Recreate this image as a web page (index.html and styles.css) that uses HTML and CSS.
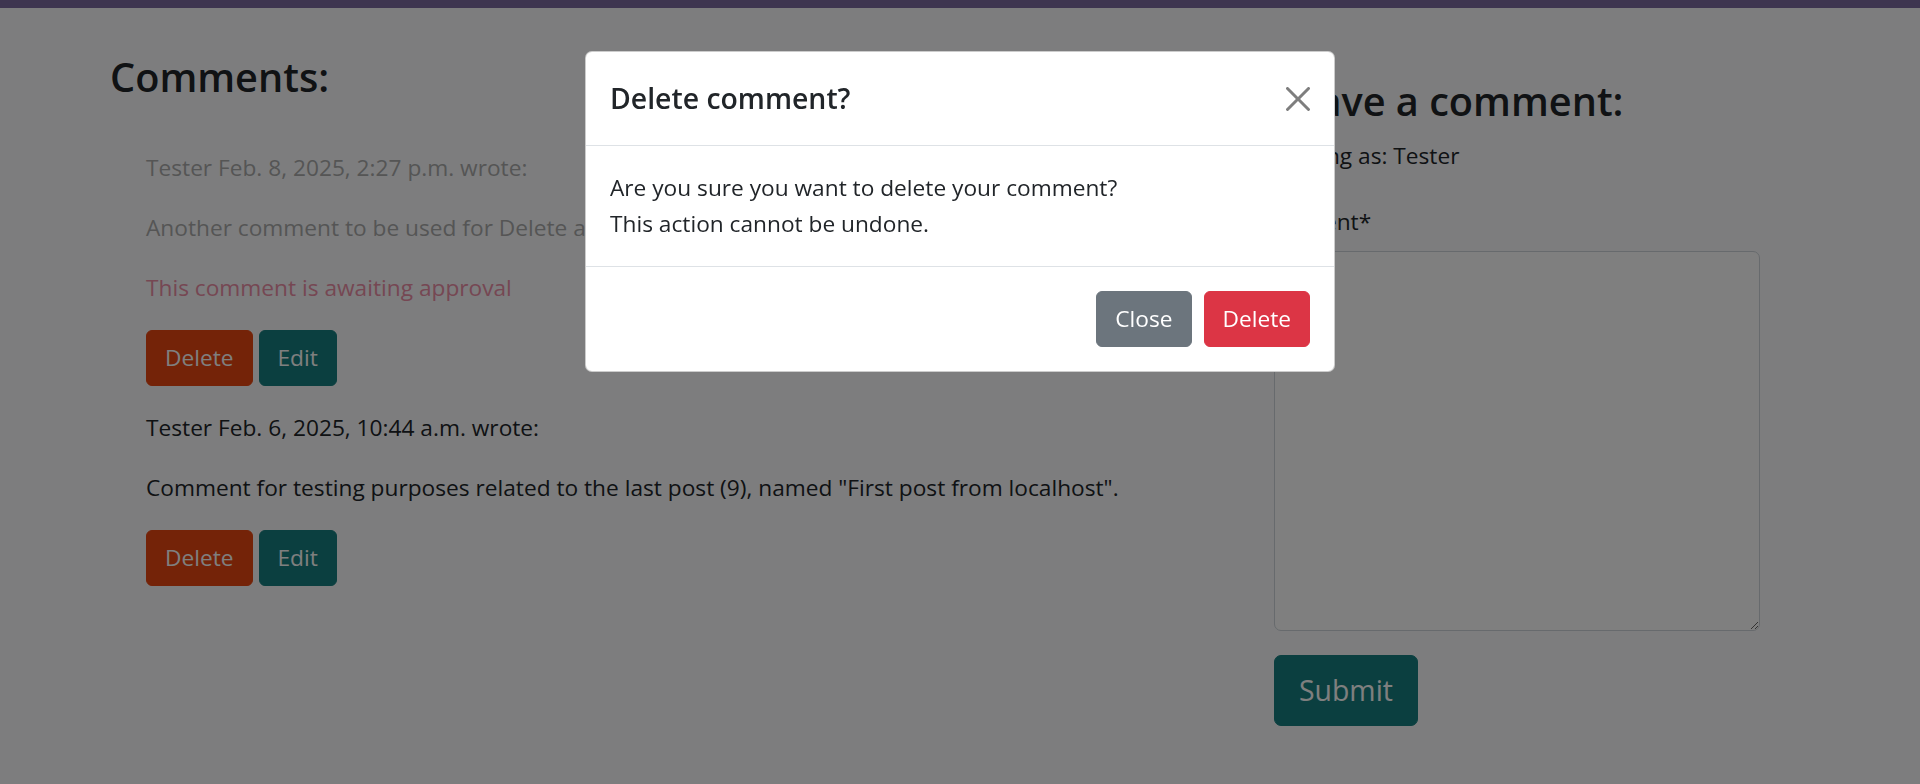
FILE: index.html
```html
<!DOCTYPE html>
<html lang="en">
<head>
<meta charset="utf-8">
<title>Post comments</title>
<link rel="stylesheet" href="styles.css">
</head>
<body class="modal-open">
  <div class="topbar"></div>
  <main class="main">
    <div class="container">
      <div class="row">
        <section class="col col-8">
          <h3 class="heading">Comments:</h3>
          <div class="card-body">
            <div class="comment">
              <p class="faded">Tester Feb. 8, 2025, 2:27 p.m. wrote:</p>
              <div class="comment-text faded">
                <p>Another comment to be used for Delete and Edit testing.</p>
              </div>
              <p class="approval">This comment is awaiting approval</p>
              <div class="actions">
                <button type="button" class="btn btn-delete">Delete</button>
                <button type="button" class="btn btn-edit">Edit</button>
              </div>
            </div>
            <div class="comment">
              <p>Tester Feb. 6, 2025, 10:44 a.m. wrote:</p>
              <div class="comment-text">
                <p>Comment for testing purposes related to the last post (9), named "First post from localhost".</p>
              </div>
              <div class="actions">
                <button type="button" class="btn btn-delete">Delete</button>
                <button type="button" class="btn btn-edit">Edit</button>
              </div>
            </div>
          </div>
        </section>
        <section class="col col-4">
          <div class="card-body">
            <h3 class="heading">Leave a comment:</h3>
            <p>Posting as: Tester</p>
            <form class="comment-form">
              <div class="field">
                <label for="id_body" class="form-label">Content<span class="asterisk">*</span></label>
                <textarea id="id_body" name="body" rows="10" class="form-control"></textarea>
              </div>
              <button type="button" class="btn btn-signup btn-lg">Submit</button>
            </form>
          </div>
        </section>
      </div>
    </div>
  </main>

  <div class="modal-backdrop"></div>
  <div class="modal" role="dialog" aria-modal="true" aria-labelledby="deleteModalLabel">
    <div class="modal-dialog">
      <div class="modal-content">
        <div class="modal-header">
          <h5 class="modal-title" id="deleteModalLabel">Delete comment?</h5>
          <button type="button" class="btn-close" aria-label="Close">
            <svg viewBox="0 0 16 16" width="24" height="24" aria-hidden="true"><path d="M.293.293a1 1 0 0 1 1.414 0L8 6.586 14.293.293a1 1 0 1 1 1.414 1.414L9.414 8l6.293 6.293a1 1 0 0 1-1.414 1.414L8 9.414l-6.293 6.293a1 1 0 0 1-1.414-1.414L6.586 8 .293 1.707a1 1 0 0 1 0-1.414z"/></svg>
          </button>
        </div>
        <div class="modal-body">
          <p class="mb-0">Are you sure you want to delete your comment?<br>This action cannot be undone.</p>
        </div>
        <div class="modal-footer">
          <button type="button" class="btn btn-secondary">Close</button>
          <button type="button" class="btn btn-danger">Delete</button>
        </div>
      </div>
    </div>
  </div>
</body>
</html>
```
FILE: styles.css
```css
* {
  box-sizing: border-box;
}

html, body {
  height: 100%;
}

body {
  margin: 0;
  overflow: hidden;
  font-family: "Open Sans", "Noto Sans", "DejaVu Sans", sans-serif;
  font-size: 22.7px;
  line-height: 36px;
  color: #212529;
  background: #fafbfd;
}

p {
  margin: 0 0 24px;
}

.mb-0 {
  margin-bottom: 0;
}

.topbar {
  height: 8px;
  background: #7c6aa0;
}

.main {
  padding-right: 26px;
}

.container {
  max-width: 1710px;
  margin: 0 auto;
  padding-top: 44px;
}

.row {
  display: flex;
}

.col {
  padding: 0 18px;
}

.col-8 {
  flex: 0 0 66.6667%;
}

.col-4 {
  flex: 0 0 33.3333%;
}

.heading {
  margin: 0 0 12px;
  font-size: 39.7px;
  line-height: 50.4px;
  font-weight: 600;
}

.card-body {
  padding: 24px;
}

.comment {
  padding: 12px;
}

.faded {
  color: #ababab;
}

.approval {
  color: #ec8ea6;
}

.actions {
  display: flex;
  gap: 6px;
}

.btn {
  display: inline-block;
  padding: 9px 18px;
  border: 1px solid transparent;
  border-radius: 6px;
  font-family: inherit;
  font-size: 22.7px;
  line-height: 36px;
  font-weight: 400;
  color: #fff;
  background: transparent;
  cursor: pointer;
}

.btn-delete {
  background: #e84610;
  border-color: #e84610;
}

.btn-edit,
.btn-signup {
  background: #167f80;
  border-color: #167f80;
}

.btn-lg {
  padding: 12px 24px;
  font-size: 28.4px;
  line-height: 45px;
  border-radius: 7px;
}

.comment-form {
  margin-top: 30px;
}

.field {
  margin-bottom: 24px;
}

.form-label {
  display: block;
  margin-bottom: 11px;
}

.form-control {
  display: block;
  width: 100%;
  height: 380px;
  padding: 9px 18px;
  font-family: inherit;
  font-size: 22.7px;
  line-height: 36px;
  color: #212529;
  background: #fff;
  border: 1px solid #ced4da;
  border-radius: 7px;
  resize: vertical;
}

/* modal */

.modal-backdrop {
  position: fixed;
  inset: 0;
  z-index: 1050;
  background: #000;
  opacity: 0.5;
}

.modal {
  position: fixed;
  inset: 0;
  z-index: 1055;
}

.modal-dialog {
  width: 750px;
  margin: 51px auto 0;
}

.modal-content {
  background: #fff;
  border: 1px solid rgba(0, 0, 0, 0.2);
  border-radius: 7px;
}

.modal-header {
  display: flex;
  align-items: center;
  justify-content: space-between;
  padding: 24px;
  border-bottom: 1px solid #dee2e6;
}

.modal-title {
  margin: 0;
  font-size: 28.4px;
  line-height: 45px;
  font-weight: 600;
}

.btn-close {
  display: flex;
  padding: 12px;
  margin: -12px -12px -12px auto;
  border: 0;
  background: transparent;
  opacity: 0.5;
  cursor: pointer;
}

.btn-close svg {
  display: block;
  fill: #000;
}

.modal-body {
  padding: 24px;
}

.modal-footer {
  display: flex;
  justify-content: flex-end;
  align-items: center;
  padding: 18px;
  border-top: 1px solid #dee2e6;
}

.modal-footer > .btn {
  margin: 6px;
}

.btn-secondary {
  background: #6c757d;
  border-color: #6c757d;
}

.btn-danger {
  background: #dc3545;
  border-color: #dc3545;
}
```
